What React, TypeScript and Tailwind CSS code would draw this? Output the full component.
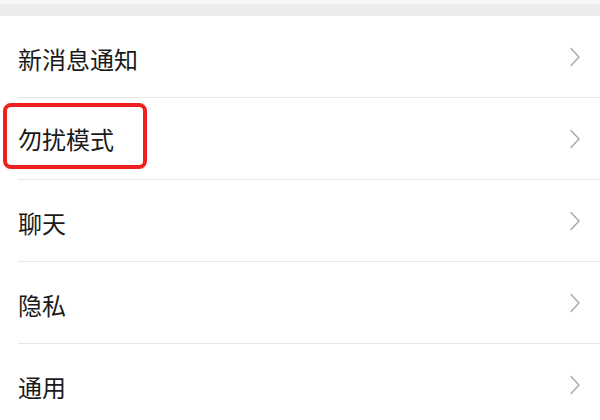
import React from "react";

const items = ["新消息通知", "勿扰模式", "聊天", "隐私", "通用"];

function Chevron() {
  return (
    <svg width="12" height="20" viewBox="0 0 12 20" className="text-[#aaaaaa]">
      <path d="M2 1.5 L10 10 L2 18.5" fill="none" stroke="currentColor" strokeWidth="1.5" strokeLinecap="round" strokeLinejoin="round" />
    </svg>
  );
}

export default function App() {
  return (
    <div
      className="w-[600px] h-[420px] overflow-hidden bg-white"
      style={{ fontFamily: '"Noto Sans CJK SC", "Noto Sans", sans-serif' }}
    >
      <div className="h-[4px] bg-[#f7f7f7]" />
      <div className="h-[12px] bg-[#ececec]" />
      {items.map((label, i) => (
        <div key={label} className="pl-[18px]">
          <div className="flex h-[82px] items-center justify-between border-b border-[#e8e8e8] pr-[19px]">
            {i === 1 ? (
              <div className="-ml-[15px] -mt-[6px] flex h-[66px] w-[144px] items-center rounded-[8px] border-[4px] border-[#ee1f1f] pl-[11px] pt-[6px]">
                <span className="text-[24px] leading-none text-[#1a1a1a]">{label}</span>
              </div>
            ) : (
              <span className="mt-[4px] text-[24px] leading-none text-[#1a1a1a]">{label}</span>
            )}
            <Chevron />
          </div>
        </div>
      ))}
    </div>
  );
}
